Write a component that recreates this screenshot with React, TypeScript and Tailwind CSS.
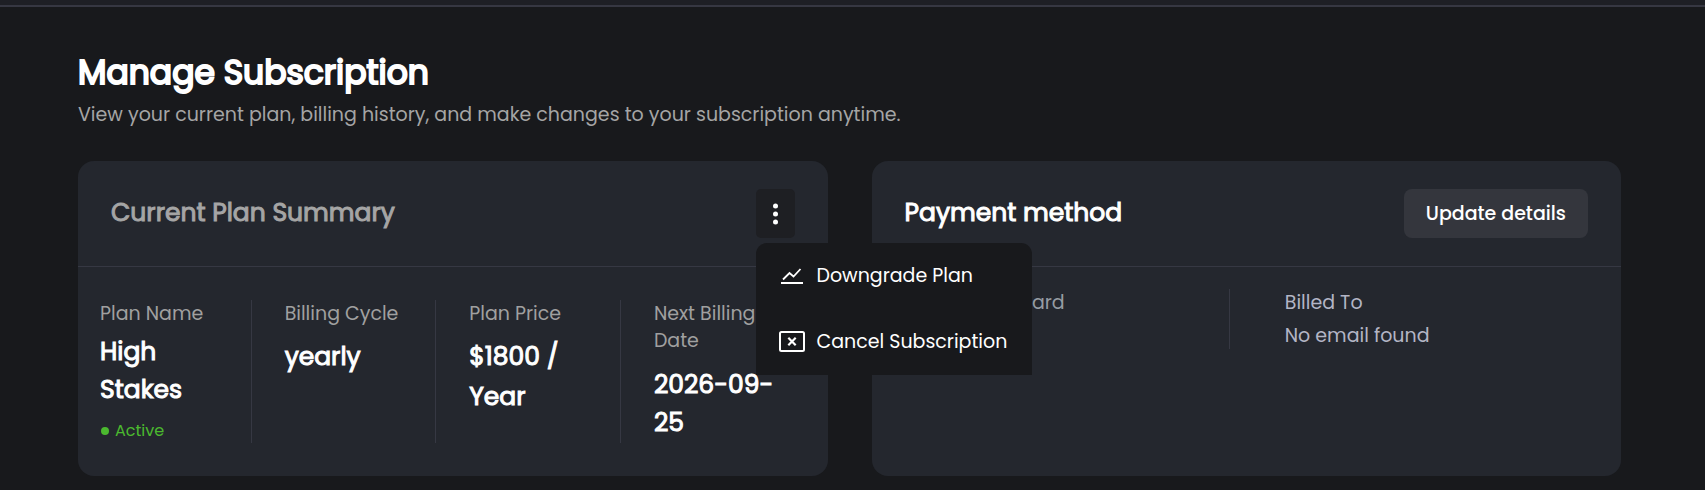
import { useState } from 'react'
import type { ReactNode } from 'react'

const planDetails = [
  { label: 'Plan Name', value: 'High Stakes', status: 'Active', spacing: 'mt-[6px] leading-[38px]' },
  { label: 'Billing Cycle', value: 'yearly', spacing: 'mt-[10px] leading-[40px]' },
  { label: 'Plan Price', value: '$1800 / Year', spacing: 'mt-[10px] leading-[40px]' },
  { label: 'Next Billing Date', value: '2026-09-25', spacing: 'mt-3 leading-[38px]' },
]

function DotsIcon() {
  return (
    <svg width="7" height="22" viewBox="0 0 7 22" fill="currentColor" aria-hidden="true">
      <circle cx="3.5" cy="3" r="2.5" />
      <circle cx="3.5" cy="11" r="2.5" />
      <circle cx="3.5" cy="19" r="2.5" />
    </svg>
  )
}

function ChartIcon() {
  return (
    <svg className="shrink-0" width="26" height="22" viewBox="0 0 26 22" fill="none" stroke="currentColor" aria-hidden="true">
      <path d="M4 14.5 10.5 8l4 3.5L21.5 4" strokeWidth="1.8" />
      <path d="M2 18h22" strokeWidth="2" />
    </svg>
  )
}

function CancelIcon() {
  return (
    <svg className="shrink-0" width="26" height="22" viewBox="0 0 26 22" fill="none" stroke="currentColor" aria-hidden="true">
      <rect x="1" y="1" width="24" height="19" rx="1.5" strokeWidth="2" />
      <path d="m9.3 6.8 7.4 7.4m0-7.4-7.4 7.4" strokeWidth="2.2" />
    </svg>
  )
}

function MenuItem({ icon, children }: { icon: ReactNode; children: ReactNode }) {
  return (
    <button
      type="button"
      role="menuitem"
      className="flex h-[66px] w-full items-center gap-3 px-[23px] text-left text-[19px] whitespace-nowrap text-white"
    >
      {icon}
      {children}
    </button>
  )
}

function PlanActions() {
  const [open, setOpen] = useState(true)

  return (
    <div className="relative">
      <button
        type="button"
        aria-label="Plan actions"
        aria-expanded={open}
        onClick={() => setOpen(!open)}
        className="flex h-[49px] w-[39px] items-center justify-center rounded-[5px] bg-[#1e1f23] text-white"
      >
        <DotsIcon />
      </button>
      {open && (
        <div role="menu" className="absolute top-[54px] left-0 z-10 w-[276px] rounded-t-[11px] bg-[#18191c]">
          <MenuItem icon={<ChartIcon />}>Downgrade Plan</MenuItem>
          <MenuItem icon={<CancelIcon />}>Cancel Subscription</MenuItem>
        </div>
      )}
    </div>
  )
}

function PlanSummary() {
  return (
    <section className="rounded-2xl bg-[#24272e]">
      <div className="flex items-center justify-between border-b border-[#363843] px-[33px] py-7">
        <h2 className="pb-px text-[25px] text-[#a5a5a5] [-webkit-text-stroke:1px]">Current Plan Summary</h2>
        <PlanActions />
      </div>
      <dl className="mr-[22px] ml-[-11px] grid grid-cols-4 py-[33px]">
        {planDetails.map(({ label, value, status, spacing }) => (
          <div key={label} className="border-r border-[#363843] px-[33px] last:border-r-0 last:pr-6">
            <dt className="text-[19px] leading-[27px] text-[#a0a0a0]">{label}</dt>
            <dd className={`text-[25px] text-white [-webkit-text-stroke:1px] ${spacing}`}>{value}</dd>
            {status && (
              <dd className="mt-[10px] flex items-center gap-[6px] text-[16px] leading-6 text-[#4bb92f]">
                <span className="ml-px size-2 rounded-full bg-[#4bb92f]" />
                {status}
              </dd>
            )}
          </div>
        ))}
      </dl>
    </section>
  )
}

function PaymentMethod() {
  return (
    <section className="rounded-2xl bg-[#24272e]">
      <div className="flex items-center justify-between border-b border-[#363843] px-[33px] py-7">
        <h2 className="pb-px text-[25px] text-white [-webkit-text-stroke:1px]">Payment method</h2>
        <button
          type="button"
          className="h-[49px] rounded-lg bg-[#34363d] px-[22px] pt-px text-[19px] font-medium text-white"
        >
          Update details
        </button>
      </div>
      <div className="grid grid-cols-[358fr_391fr] py-[22px] text-[19px]">
        <div className="border-r border-[#363843] pl-6">
          <p className="leading-[27px] text-[#969ca3]">Credit/Debit Card</p>
        </div>
        <div className="pl-[55px] text-[#b3b5c5]">
          <p className="leading-[27px]">Billed To</p>
          <p className="mt-[6px] leading-[27px]">No email found</p>
        </div>
      </div>
    </section>
  )
}

export default function App() {
  return (
    <div className="min-h-screen bg-[#18191c] font-['Poppins','Inter',sans-serif]">
      <div className="h-[7px] border-b-2 border-[#363742] bg-[#1e1f25]" />
      <main className="pt-[42px] pr-[84px] pb-[14px] pl-[78px]">
        <h1 className="text-[33px] leading-[48px] text-white [-webkit-text-stroke:2px]">Manage Subscription</h1>
        <p className="mt-[3px] text-[19px] leading-[30px] text-[#a5a5a5]">
          View your current plan, billing history, and make changes to your subscription anytime.
        </p>
        <div className="mt-[31px] grid grid-cols-2 gap-11">
          <PlanSummary />
          <PaymentMethod />
        </div>
      </main>
    </div>
  )
}
